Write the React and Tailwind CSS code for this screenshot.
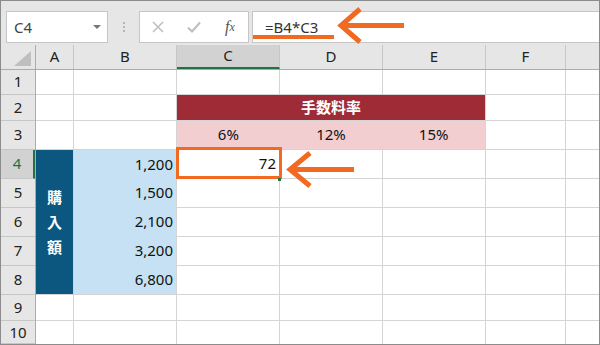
import React from "react";

const cols = ["A", "B", "C", "D", "E", "F", ""];
const colW = ["w-[38px]", "w-[103px]", "w-[103px]", "w-[103px]", "w-[103px]", "w-[80px]", "flex-1"];
const rowH = ["h-[25px]", "h-[26px]", "h-[29px]", "h-[29px]", "h-[29px]", "h-[29px]", "h-[29px]", "h-[29px]", "h-[26px]", "flex-1"];
const amounts = ["1,200", "1,500", "2,100", "3,200", "6,800"];

function Cell({ children, className = "" }) {
  return <div className={"bg-white " + className}>{children}</div>;
}

function Toolbar() {
  return (
    <div className="h-[51px] flex items-start pt-[10px] pl-[5px]">
      <div className="w-[102px] h-[32px] border border-[#c6c6c6] bg-white flex items-center justify-between pl-[7px] pr-[6px]">
        <span className="text-[15px] text-[#444]">C4</span>
        <span className="w-0 h-0 border-l-[4px] border-r-[4px] border-t-[4px] border-l-transparent border-r-transparent border-t-[#777]" />
      </div>
      <div className="w-[31px] h-[32px] flex flex-col items-center justify-center gap-[2px]">
        <span className="w-[2px] h-[2px] bg-[#b5b5b5]" />
        <span className="w-[2px] h-[2px] bg-[#b5b5b5]" />
        <span className="w-[2px] h-[2px] bg-[#b5b5b5]" />
      </div>
      <div className="w-[110px] h-[32px] border border-[#c6c6c6] bg-white flex items-center">
        <span className="w-[36px] flex justify-center">
          <svg width="12" height="12" viewBox="0 0 12 12">
            <path d="M1 1L11 11M11 1L1 11" stroke="#bdbdbd" strokeWidth="1.5" />
          </svg>
        </span>
        <span className="w-[36px] flex justify-center">
          <svg width="14" height="12" viewBox="0 0 14 12">
            <path d="M1 6.5L5 10.5L13 1.5" stroke="#bdbdbd" strokeWidth="2" fill="none" />
          </svg>
        </span>
        <span className="w-[36px] flex justify-center font-['Liberation_Serif',serif] italic text-[16px] text-[#555]">
          f<span className="text-[12px] mt-[3px]">x</span>
        </span>
      </div>
      <div className="ml-[3px] flex-1 h-[32px] border-y border-l border-[#c6c6c6] bg-white flex items-center pl-[12px]">
        <span className="text-[15px] text-[#333]">=B4*C3</span>
      </div>
    </div>
  );
}

function ColumnHeader() {
  return (
    <div className="h-[25px] flex border-b border-[#ababab]">
      <div className="w-[35px] border-r border-[#ababab] relative">
        <svg className="absolute left-[13px] top-[6px]" width="18" height="16" viewBox="0 0 18 16">
          <path d="M17 0L17 15L0 15Z" fill="#bfbfbf" />
        </svg>
      </div>
      {cols.map((c, i) => (
        <div
          key={i}
          className={
            colW[i] +
            " flex items-center justify-center text-[15px] text-[#222] " +
            (i < 6 ? "border-r border-[#c6c6c6] " : "") +
            (c === "C" ? "bg-[#d2d2d2] border-b-2 border-b-[#217346]" : "")
          }
        >
          {c}
        </div>
      ))}
    </div>
  );
}

function RowHeader() {
  return (
    <div className="w-[35px] flex flex-col border-r border-[#ababab]">
      {rowH.map((h, i) => (
        <div
          key={i}
          className={
            h +
            " flex items-center justify-center text-[15px] border-b border-[#c6c6c6] " +
            (i === 3 ? "bg-[#d2d2d2] text-[#217346] border-r-2 border-r-[#217346]" : "text-[#222]")
          }
        >
          {i + 1}
        </div>
      ))}
    </div>
  );
}

function Sheet() {
  return (
    <div className="flex-1 grid grid-cols-[37px_102px_102px_102px_102px_79px_1fr] grid-rows-[24px_25px_28px_28px_28px_28px_28px_28px_25px_1fr] gap-px bg-[#d4d4d4] text-[15px] text-[#111]">
      {/* row 1 */}
      {[0, 1, 2, 3, 4, 5, 6].map((i) => <Cell key={"r1" + i} />)}
      {/* row 2 */}
      <Cell />
      <Cell />
      <div className="col-span-3 bg-[#9f2b37] flex items-center justify-center text-white font-bold text-[15px] font-['Noto_Sans_CJK_JP',sans-serif]">
        手数料率
      </div>
      <Cell />
      <Cell />
      {/* row 3 */}
      <Cell />
      <Cell />
      <div className="col-span-3 bg-[#f2ced1] grid grid-cols-3 items-center text-center">
        <span>6%</span>
        <span>12%</span>
        <span>15%</span>
      </div>
      <Cell />
      <Cell />
      {/* row 4 - 8 */}
      <div className="row-span-5 bg-[#0b577f] flex flex-col items-center justify-center text-white font-bold text-[15px] leading-[25px] font-['Noto_Sans_CJK_JP',sans-serif]">
        <span>購</span>
        <span>入</span>
        <span>額</span>
      </div>
      <div className="row-span-5 bg-[#c5e1f3] flex flex-col">
        {amounts.map((a) => (
          <div key={a} className="flex-1 flex items-center justify-end pr-[3px]">
            {a}
          </div>
        ))}
      </div>
      <div className="bg-white relative flex items-center justify-end pr-[3px]">
        72
        <div className="absolute -left-px -top-[3px] -right-[3px] -bottom-px border-[3px] border-[#f26a21]" />
        <div className="absolute -right-[2px] -bottom-[3px] w-[3px] h-[3px] bg-[#217346]" />
      </div>
      {[0, 1, 2, 3].map((i) => <Cell key={"r4" + i} />)}
      {[5, 6, 7, 8].map((r) =>
        [0, 1, 2, 3, 4].map((i) => <Cell key={"r" + r + i} />)
      )}
      {/* row 9, 10 */}
      {[9, 10].map((r) =>
        [0, 1, 2, 3, 4, 5, 6].map((i) => <Cell key={"r" + r + i} />)
      )}
    </div>
  );
}

export default function App() {
  return (
    <div className="w-[600px] h-[345px] relative overflow-hidden border border-[#8c8c8c] bg-[#e6e6e6] flex flex-col font-['Noto_Sans','Noto_Sans_CJK_JP',sans-serif]">
      <Toolbar />
      <ColumnHeader />
      <div className="flex-1 flex">
        <RowHeader />
        <Sheet />
      </div>

      <svg className="absolute left-0 top-0 pointer-events-none" width="600" height="345" viewBox="0 0 600 345">
        <rect x="252" y="34" width="81" height="4" fill="#f26a21" />
        <path d="M403 24.5L341 24.5" stroke="#f26a21" strokeWidth="5" />
        <path d="M359 8L340 24.5L359 41" stroke="#f26a21" strokeWidth="5" fill="none" />
        <path d="M353 168.5L291 168.5" stroke="#f26a21" strokeWidth="5" />
        <path d="M309 152L289 168.5L309 185" stroke="#f26a21" strokeWidth="5" fill="none" />
      </svg>
    </div>
  );
}
